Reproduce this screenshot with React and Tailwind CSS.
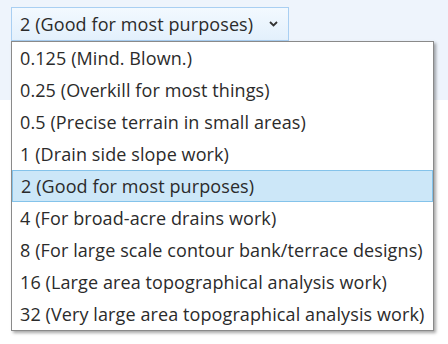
const OPTIONS = [
  '0.125 (Mind. Blown.)',
  '0.25 (Overkill for most things)',
  '0.5 (Precise terrain in small areas)',
  '1 (Drain side slope work)',
  '2 (Good for most purposes)',
  '4 (For broad-acre drains work)',
  '8 (For large scale contour bank/terrace designs)',
  '16 (Large area topographical analysis work)',
  '32 (Very large area topographical analysis work)',
];

const SELECTED = 4;

export default function App() {
  return (
    <div
      className="relative h-[344px] w-[448px] overflow-hidden bg-white text-[#2b2b2b]"
      style={{ fontFamily: '"Open Sans", "Noto Sans", sans-serif' }}
    >
      <div className="h-[100px] w-full bg-[#eef4fc]" />

      <div className="absolute left-[11px] top-[7px]">
        <div className="flex h-[34px] w-[278px] items-center border border-[#a9cff2] bg-gradient-to-b from-[#f3f9ff] to-[#e3f0fc] pl-[8px] pr-[10px]">
          <span className="whitespace-nowrap text-[18px] leading-none tracking-[0.1px]">{OPTIONS[SELECTED]}</span>
          <svg width="9" height="6" viewBox="0 0 9 6" className="ml-auto shrink-0">
            <path d="M1 1 L4.5 4.5 L8 1" fill="none" stroke="#333" strokeWidth="1.8" />
          </svg>
        </div>

        <div className="w-[423px] border border-[#8a8a8a] bg-white shadow-[2px_2px_3px_rgba(0,0,0,0.35)]">
          {OPTIONS.map((opt, i) => (
            <div
              key={opt}
              className={`flex h-[32px] items-center whitespace-nowrap px-[8px] text-[18px] leading-none tracking-[0.1px] ${
                i === SELECTED ? 'border border-[#84c3ea] bg-[#cce7f8] px-[7px]' : ''
              }`}
            >
              {opt}
            </div>
          ))}
        </div>
      </div>
    </div>
  );
}
